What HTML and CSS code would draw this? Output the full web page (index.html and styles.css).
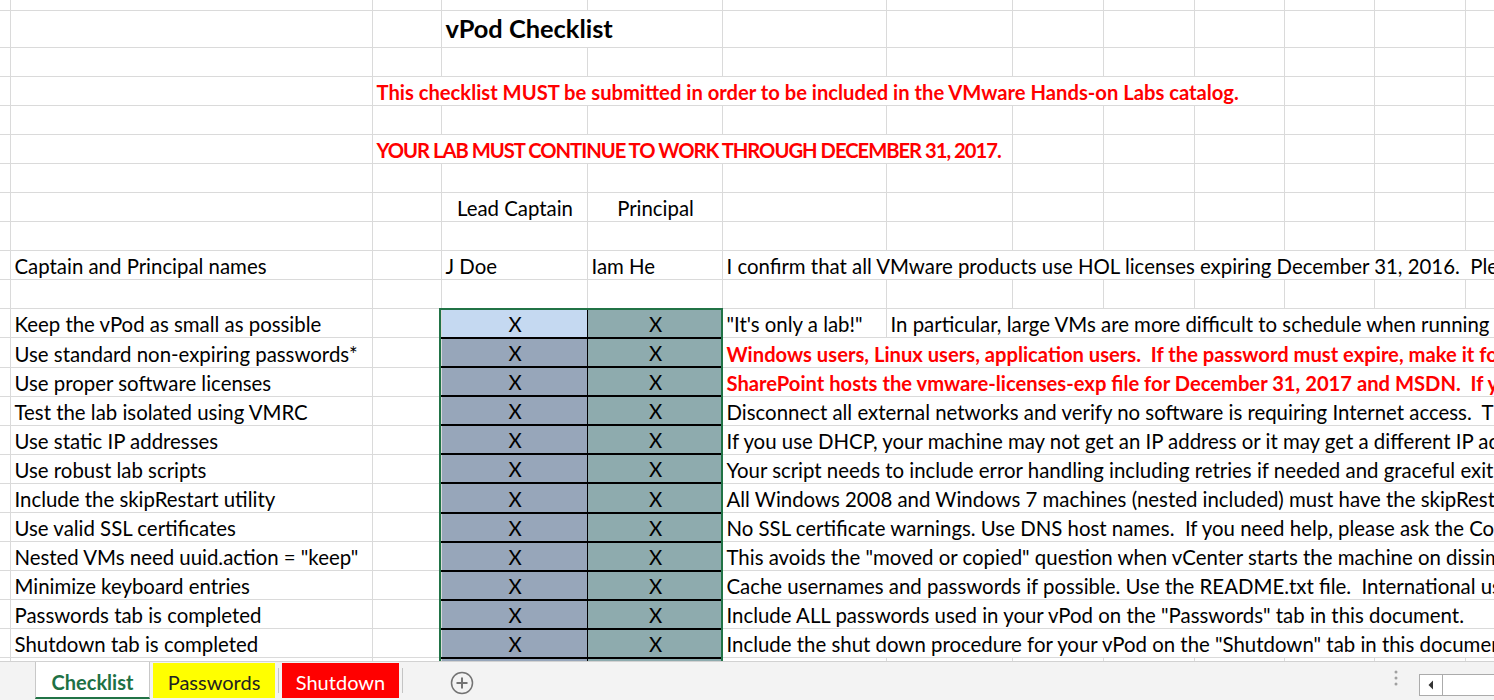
FILE: index.html
```
<!DOCTYPE html>
<html lang="en">
<head>
<meta charset="utf-8">
<title>vPod Checklist</title>
<link rel="stylesheet" href="styles.css">
</head>
<body>
<div class="app">
  <div class="grid-area">
    <table class="sheet">
      <colgroup>
        <col class="w0"><col class="wa"><col class="wb"><col class="wc"><col class="wd"><col class="we"><col class="wf">
        <col class="wg"><col class="wg"><col class="wi"><col class="wi"><col class="wg"><col class="wg">
      </colgroup>
      <tr class="r1"><td></td><td></td><td></td><td></td><td></td><td></td><td></td><td></td><td></td><td></td><td></td><td></td><td></td></tr>
      <tr class="r2"><td></td><td></td><td></td><td class="title" colspan="2">vPod Checklist</td><td></td><td></td><td></td><td></td><td></td><td></td><td></td><td></td></tr>
      <tr><td></td><td></td><td></td><td></td><td></td><td></td><td></td><td></td><td></td><td></td><td></td><td></td><td></td></tr>
      <tr><td></td><td></td><td class="b red" colspan="8">This checklist MUST be submitted in order to be included in the VMware Hands-on Labs catalog.</td><td></td><td></td><td></td></tr>
      <tr><td></td><td></td><td></td><td></td><td></td><td></td><td></td><td></td><td></td><td></td><td></td><td></td><td></td></tr>
      <tr><td></td><td></td><td class="b red caps" colspan="5">YOUR LAB MUST CONTINUE TO WORK THROUGH DECEMBER 31, 2017.</td><td></td><td></td><td></td><td></td><td></td><td></td></tr>
      <tr><td></td><td></td><td></td><td></td><td></td><td></td><td></td><td></td><td></td><td></td><td></td><td></td><td></td></tr>
      <tr><td></td><td></td><td></td><td class="ctr">Lead Captain</td><td class="ctr">Principal</td><td></td><td></td><td></td><td></td><td></td><td></td><td></td><td></td></tr>
      <tr><td></td><td></td><td></td><td></td><td></td><td></td><td></td><td></td><td></td><td></td><td></td><td></td><td></td></tr>
      <tr><td></td><td>Captain and Principal names</td><td></td><td>J Doe</td><td>Iam He</td><td colspan="8">I confirm that all VMware products use HOL licenses expiring December 31, 2016.  Please</td></tr>
      <tr><td></td><td></td><td></td><td></td><td></td><td></td><td></td><td></td><td></td><td></td><td></td><td></td><td></td></tr>
      <tr><td></td><td>Keep the vPod as small as possible</td><td></td><td class="x x0">X</td><td class="x xd">X</td><td>"It's only a lab!"</td><td colspan="7">In particular, large VMs are more difficult to schedule when running</td></tr>
      <tr><td></td><td>Use standard non-expiring passwords*</td><td></td><td class="x">X</td><td class="x xd">X</td><td class="b red" colspan="8">Windows users, Linux users, application users.  If the password must expire, make it for</td></tr>
      <tr><td></td><td>Use proper software licenses</td><td></td><td class="x">X</td><td class="x xd">X</td><td class="b red" colspan="8">SharePoint hosts the vmware-licenses-exp file for December 31, 2017 and MSDN.  If you</td></tr>
      <tr><td></td><td>Test the lab isolated using VMRC</td><td></td><td class="x">X</td><td class="x xd">X</td><td colspan="8">Disconnect all external networks and verify no software is requiring Internet access.  The</td></tr>
      <tr><td></td><td>Use static IP addresses</td><td></td><td class="x">X</td><td class="x xd">X</td><td colspan="8">If you use DHCP, your machine may not get an IP address or it may get a different IP address</td></tr>
      <tr><td></td><td>Use robust lab scripts</td><td></td><td class="x">X</td><td class="x xd">X</td><td colspan="8">Your script needs to include error handling including retries if needed and graceful exit</td></tr>
      <tr><td></td><td>Include the skipRestart utility</td><td></td><td class="x">X</td><td class="x xd">X</td><td colspan="8">All Windows 2008 and Windows 7 machines (nested included) must have the skipRestart</td></tr>
      <tr><td></td><td>Use valid SSL certificates</td><td></td><td class="x">X</td><td class="x xd">X</td><td colspan="8">No SSL certificate warnings. Use DNS host names.  If you need help, please ask the Core</td></tr>
      <tr><td></td><td>Nested VMs need uuid.action = "keep"</td><td></td><td class="x">X</td><td class="x xd">X</td><td colspan="8">This avoids the "moved or copied" question when vCenter starts the machine on dissimilar</td></tr>
      <tr><td></td><td>Minimize keyboard entries</td><td></td><td class="x">X</td><td class="x xd">X</td><td colspan="8">Cache usernames and passwords if possible. Use the README.txt file.  International users</td></tr>
      <tr><td></td><td>Passwords tab is completed</td><td></td><td class="x">X</td><td class="x xd">X</td><td colspan="8">Include ALL passwords used in your vPod on the "Passwords" tab in this document.</td></tr>
      <tr><td></td><td>Shutdown tab is completed</td><td></td><td class="x">X</td><td class="x xd">X</td><td colspan="8">Include the shut down procedure for your vPod on the "Shutdown" tab in this document.</td></tr>
      <tr><td></td><td></td><td></td><td class="x"></td><td class="x xd"></td><td></td><td></td><td></td><td></td><td></td><td></td><td></td><td></td></tr>
    </table>
    <div class="selection"></div>
  </div>
  <div class="tabbar">
    <div class="tab active">Checklist</div>
    <div class="tab yellow">Passwords</div>
    <span class="sep"></span>
    <div class="tab red-tab">Shutdown</div>
    <span class="sep"></span>
    <span class="add">
      <svg width="24" height="24" viewBox="0 0 24 24"><circle cx="12" cy="12" r="10.5" fill="none" stroke="#737373" stroke-width="1.5"/><path d="M12 6.5v11M6.5 12h11" stroke="#737373" stroke-width="2"/></svg>
    </span>
    <div class="right">
      <svg class="dots" width="8" height="18" viewBox="0 0 8 18"><circle cx="4" cy="3" r="1.5" fill="#a0a0a0"/><circle cx="4" cy="9" r="1.5" fill="#a0a0a0"/><circle cx="4" cy="15" r="1.5" fill="#a0a0a0"/></svg>
      <div class="hscroll">
        <span class="arrow"><svg width="6" height="10" viewBox="0 0 6 10"><path d="M5 0.5L0.5 5L5 9.5Z" fill="#333"/></svg></span>
        <span class="track"></span>
      </div>
    </div>
  </div>
</div>
</body>
</html>
```

FILE: styles.css
```
html, body {
  margin: 0;
  padding: 0;
  background: #fff;
  overflow: hidden;
}
body {
  font-family: Lato, "Liberation Sans", sans-serif;
  font-size: 20.4px;
  color: #000;
}
.app {
  width: 1494px;
  height: 700px;
  display: flex;
  flex-direction: column;
  overflow: hidden;
}
.grid-area {
  position: relative;
  flex: 0 0 661px;
  overflow: hidden;
}
.sheet {
  border-collapse: collapse;
  table-layout: fixed;
  width: 1556px;
}
.w0 { width: 10px; }
.wa { width: 362px; }
.wb { width: 69px; }
.wc { width: 146px; }
.wd { width: 135px; }
.we { width: 164px; }
.wf { width: 126px; }
.wg { width: 91px; }
.wi { width: 90px; }
.sheet tr { height: 29.1px; }
.sheet tr.r1 { height: 10px; }
.sheet tr.r2 { height: 37px; }
.sheet td {
  border: 1px solid #dadada;
  padding: 0 2px 1px 4px;
  white-space: pre;
  overflow: hidden;
  vertical-align: bottom;
  line-height: 23px;
}
.sheet tr.r1 td { border-top: 0; }
.sheet td:first-child { border-left: 0; }
.sheet td.title {
  font-size: 25.4px;
  font-weight: 700;
  line-height: 27px;
  padding-bottom: 5px;
}
.b { font-weight: 700; font-size: 20.2px; }
.caps { letter-spacing: -1px; }
.red { color: #ff0000; }
.ctr { text-align: center; }
.sheet td.x {
  text-align: center;
  background: #97a6ba;
  border-bottom: 2px solid #000;
  border-right: 1px solid #000;
}
.sheet td.x0 { background: #c5d9f1; }
.sheet td.xd { background: #8eabae; }
.selection {
  position: absolute;
  left: 439px;
  top: 308px;
  width: 284px;
  height: 420px;
  border: 2px solid #217346;
  box-sizing: border-box;
  pointer-events: none;
}
.tabbar {
  flex: 0 0 39px;
  display: flex;
  align-items: flex-start;
  background: #f3f3f3;
  border-top: 1px solid #d2d2d2;
  box-sizing: border-box;
  padding-left: 35px;
}
.tab {
  height: 35px;
  margin-top: 1px;
  padding-top: 3px;
  line-height: 32px;
  text-align: center;
  box-sizing: border-box;
  font-size: 20px;
}
.tab.active {
  width: 115px;
  margin-top: 0;
  height: 37px;
  padding-top: 4px;
  background: #fff;
  border: 1px solid #c8c8c8;
  border-top: 0;
  border-bottom: 2px solid #217346;
  color: #1e7145;
  font-weight: 700;
}
.tab.yellow {
  width: 122px;
  margin-left: 3px;
  background: #ffff00;
  color: #222;
}
.tab.red-tab {
  width: 117px;
  background: #ff0000;
  color: #fff;
}
.sep {
  width: 1px;
  height: 25px;
  margin: 6px 3px 0;
  background: #c4c4c4;
}
.add {
  margin-left: 44px;
  margin-top: 9px;
  width: 24px;
  height: 24px;
  display: flex;
}
.right {
  margin-left: auto;
  display: flex;
  align-items: flex-start;
}
.dots {
  margin-top: 7px;
  margin-right: 19px;
  display: block;
}
.hscroll {
  margin-top: 12px;
  width: 75px;
  height: 22px;
  box-sizing: border-box;
  border: 1px solid #ababab;
  border-right: 0;
  background: #fff;
  display: flex;
}
.arrow {
  width: 22px;
  border-right: 1px solid #ababab;
  display: flex;
  align-items: center;
  justify-content: center;
}
.track { flex: 1; }
```
